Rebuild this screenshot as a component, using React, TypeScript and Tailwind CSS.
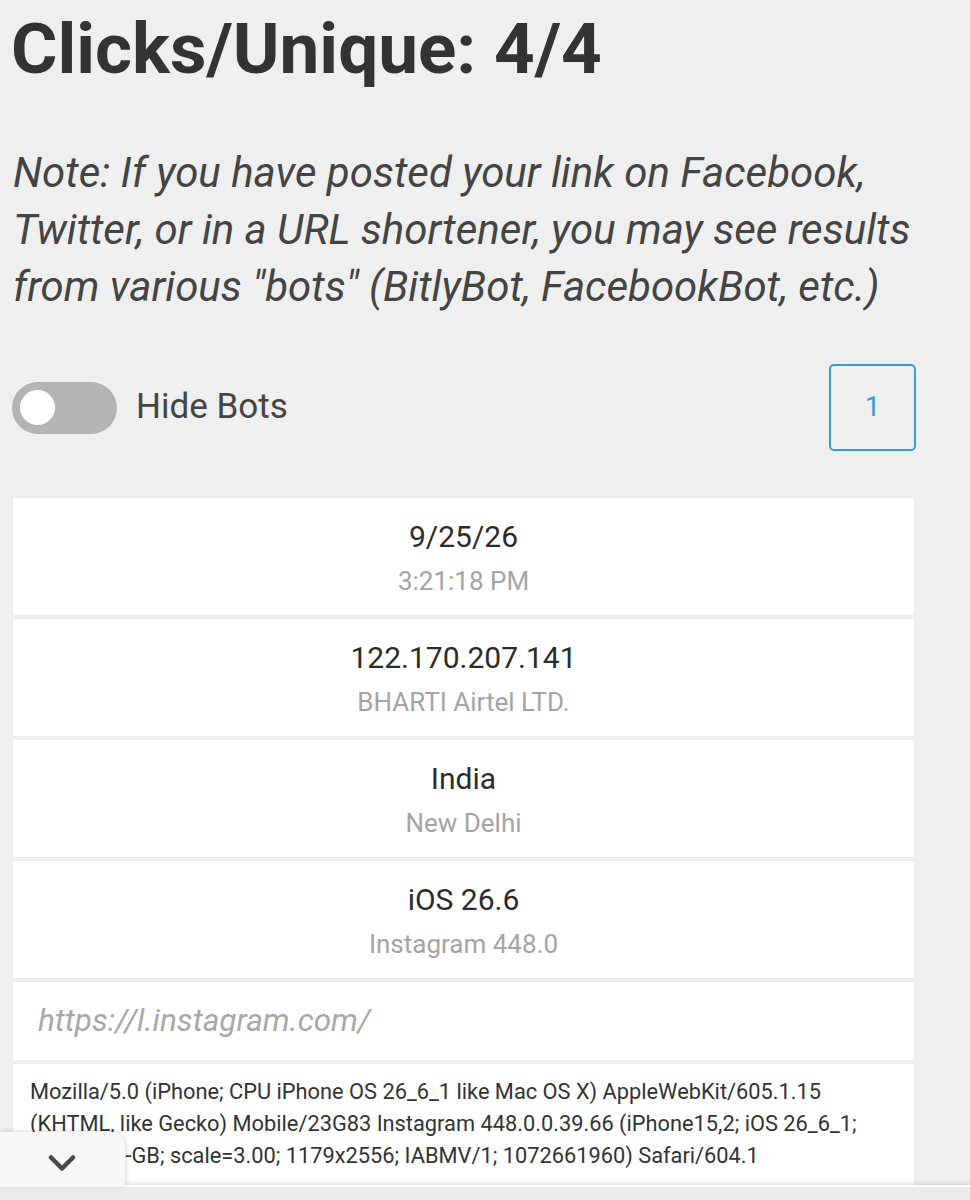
import { ChevronDown } from "lucide-react";

type Row = { main: string; sub: string };

const rows: Row[] = [
  { main: "9/25/26", sub: "3:21:18 PM" },
  { main: "122.170.207.141", sub: "BHARTI Airtel LTD." },
  { main: "India", sub: "New Delhi" },
  { main: "iOS 26.6", sub: "Instagram 448.0" },
];

const UA =
  "Mozilla/5.0 (iPhone; CPU iPhone OS 26_6_1 like Mac OS X) AppleWebKit/605.1.15 (KHTML, like Gecko) Mobile/23G83 Instagram 448.0.0.39.66 (iPhone15,2; iOS 26_6_1; en_GB; en-GB; scale=3.00; 1179x2556; IABMV/1; 1072661960) Safari/604.1";

export default function App() {
  return (
    <div className="min-h-[1200px] bg-[#efefef] px-[13px] font-['Roboto','Liberation_Sans',sans-serif]">
      <h1 className="pt-[6px] text-[71px] leading-[86px] font-bold text-[#333] -ml-[2px]">
        Clicks/Unique: 4/4
      </h1>

      <p className="mt-[52px] text-[42px] leading-[57px] italic text-[#444] whitespace-nowrap">
        Note: If you have posted your link on Facebook,
        <br />
        Twitter, or in a URL shortener, you may see results
        <br />
        from various "bots" (BitlyBot, FacebookBot, etc.)
      </p>

      <div className="mt-[49px] flex h-[87px] items-center justify-between pr-[41px]">
        <div className="flex items-center">
          <button className="-ml-[1px] flex h-[52px] w-[105px] items-center rounded-full bg-[#b4b4b4] pl-[8px]">
            <span className="h-[35px] w-[35px] rounded-full bg-white" />
          </button>
          <span className="ml-[19px] text-[35px] text-[#444]">Hide Bots</span>
        </div>
        <button className="flex h-[87px] w-[87px] items-center justify-center rounded-[5px] border-2 border-[#3a9ad9] text-[27px] text-[#3a9ad9]">
          1
        </button>
      </div>

      <div className="mt-[47px] mr-[43px] flex flex-col gap-[4px]">
        {rows.map(r => (
          <div
            key={r.main}
            className="h-[117px] bg-white pt-[21px] text-center shadow-[0_0_0_1px_#e9ecee]"
          >
            <div className="text-[30px] leading-[36px] text-[#2b2b2b]">{r.main}</div>
            <div className="mt-[10px] text-[26px] leading-[32px] text-[#a4a4a4]">{r.sub}</div>
          </div>
        ))}
        <div className="h-[78px] bg-white pl-[25px] pt-[20px] shadow-[0_0_0_1px_#e9ecee]">
          <span className="text-[31.5px] leading-[38px] italic text-[#a8a8a8]">https://l.instagram.com/</span>
        </div>
        <div className="bg-white pl-[17px] pr-[14px] pt-[12px] pb-[40px] text-[21.8px] leading-[32px] text-[#333] shadow-[0_0_0_1px_#e9ecee]">
          {UA}
        </div>
      </div>

      <div className="fixed bottom-0 left-0 right-0 h-[15px] border-t-2 border-white bg-[#ebebeb] shadow-[0_-2px_4px_rgba(0,0,0,0.12)]" />
      <div className="fixed bottom-[13px] left-0 flex h-[55px] w-[125px] items-center justify-center rounded-tr-[14px] bg-[#f7f7f7] shadow-[1px_-1px_4px_rgba(0,0,0,0.15)]">
        <ChevronDown className="-ml-[2px] mt-[6px] h-[44px] w-[44px] text-[#4a4a4a]" strokeWidth={2.5} />
      </div>
    </div>
  );
}
